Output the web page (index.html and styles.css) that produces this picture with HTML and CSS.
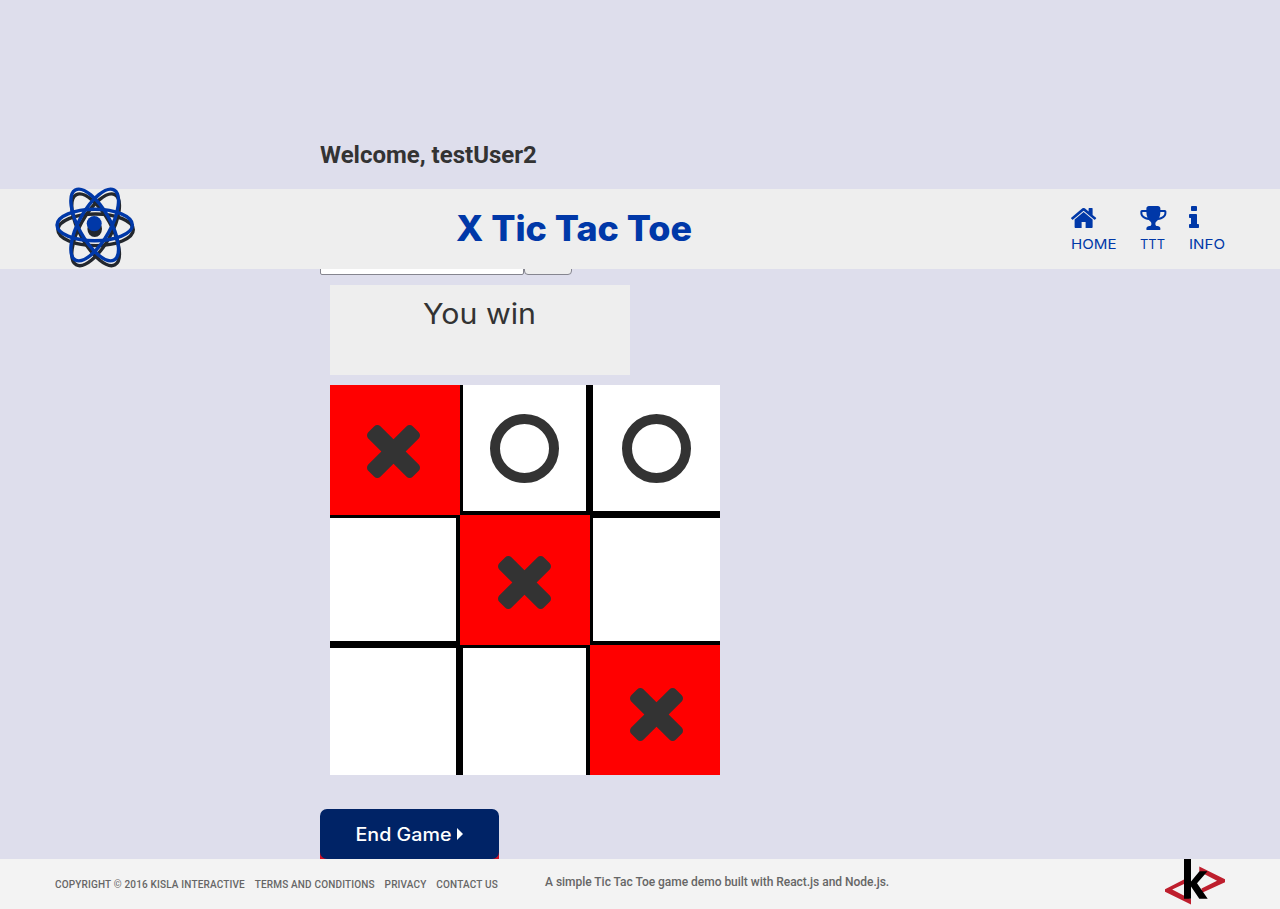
FILE: index.html
```html
<!DOCTYPE html>
<html lang="en">
<head>
<meta charset="utf-8">
<title>X Tic Tac Toe</title>
<link rel="stylesheet" href="styles.css">
</head>
<body>
<svg class="defs" width="0" height="0" aria-hidden="true">
  <symbol id="times" viewBox="110 366 1188 1188"><path d="M1298 1322q0 40-28 68l-136 136q-28 28-68 28t-68-28l-294-294-294 294q-28 28-68 28t-68-28l-136-136q-28-28-28-68t28-68l294-294-294-294q-28-28-28-68t28-68l136-136q28-28 68-28t68 28l294 294 294-294q28-28 68-28t68 28l136 136q28 28 28 68t-28 68l-294 294 294 294q28 28 28 68z"/></symbol>
  <g id="orbits">
    <ellipse cx="39.7" cy="38" rx="37.7" ry="15.8"/>
    <ellipse cx="39.7" cy="38" rx="40" ry="15.8" transform="rotate(61 39.7 38)"/>
    <ellipse cx="39.7" cy="38" rx="40" ry="15.8" transform="rotate(-61 39.7 38)"/>
  </g>
</svg>

<header class="header">
  <svg class="logo" width="80" height="80" viewBox="0 0 80 80">
    <g fill="none" stroke="#23272d" stroke-width="3.4"><use href="#orbits" x=".9" y="4.8"/></g>
    <ellipse cx="39.7" cy="42" rx="7.3" ry="8" fill="#23272d"/>
    <g fill="none" stroke="#0038a8" stroke-width="3.4"><use href="#orbits"/></g>
    <ellipse cx="39.2" cy="36.6" rx="7.5" ry="7.6" fill="#0038a8"/>
  </svg>
  <h1 class="title"><svg width="236" height="50"><text x="-1" y="34" textLength="236" lengthAdjust="spacingAndGlyphs">X Tic Tac Toe</text></svg></h1>
  <nav class="nav">
    <a class="nav-item nav-home">
      <svg width="28" height="28" viewBox="89 0 1792 1792"><path d="M1472 992v480q0 26-19 45t-45 19h-384v-384h-256v384h-384q-26 0-45-19t-19-45v-480q0-1 .5-3t.5-3l575-474 575 474q1 2 1 6zm223-69l-62 74q-8 9-21 11h-3q-13 0-21-7l-692-577-692 577q-12 8-24 7-13-2-21-11l-62-74q-8-10-7-23.5t11-21.5l719-599q32-26 76-26t76 26l244 204v-195q0-14 9-23t23-9h192q14 0 23 9t9 23v408l219 182q10 8 11 21.5t-7 23.5z"/></svg>
      <svg width="46" height="18"><text x="0" y="15" textLength="45.5" lengthAdjust="spacingAndGlyphs">HOME</text></svg>
    </a>
    <a class="nav-item nav-ttt">
      <svg width="28" height="28" viewBox="40 0 1792 1792"><path d="M522 883q-74-162-74-371h-256v96q0 78 94.5 162t235.5 113zm1078-275v-96h-256q0 209-74 371 141-29 235.5-113t94.5-162zm128-128v128q0 71-41.5 143t-112 130-173 97.5-215.5 44.5q-42 54-95 95-38 34-52.5 72.5t-14.5 89.5q0 54 30.5 91t97.5 37q75 0 133.5 45.5t58.5 114.5v64q0 14-9 23t-23 9h-832q-14 0-23-9t-9-23v-64q0-69 58.5-114.5t133.5-45.5q67 0 97.5-37t30.5-91q0-51-14.5-89.5t-52.5-72.5q-53-41-95-95-113-5-215.5-44.5t-173-97.5-112-130-41.5-143v-128q0-40 28-68t68-28h288v-96q0-66 47-113t113-47h576q66 0 113 47t47 113v96h288q40 0 68 28t28 68z"/></svg>
      <svg width="26" height="18"><text x="0" y="15" textLength="25" lengthAdjust="spacingAndGlyphs">TTT</text></svg>
    </a>
    <a class="nav-item nav-info">
      <svg width="28" height="28" viewBox="576 0 1792 1792"><path d="M1216 1344v128q0 26-19 45t-45 19h-512q-26 0-45-19t-19-45v-128q0-26 19-45t45-19h64v-384h-64q-26 0-45-19t-19-45v-128q0-26 19-45t45-19h384q26 0 45 19t19 45v576h64q26 0 45 19t19 45zm-128-1152v192q0 26-19 45t-45 19h-256q-26 0-45-19t-19-45v-192q0-26 19-45t45-19h256q26 0 45 19t19 45z"/></svg>
      <svg width="37" height="18"><text x="0" y="15" textLength="36" lengthAdjust="spacingAndGlyphs">INFO</text></svg>
    </a>
  </nav>
</header>

<main class="main">
  <h2 class="welcome">Welcome, testUser2</h2>
  <div class="chat"><div class="field"></div><div class="send"></div></div>
  <div class="status"><svg width="112" height="40"><text x="-1" y="28.5" textLength="113" lengthAdjust="spacingAndGlyphs">You win</text></svg></div>
  <div class="board">
    <div class="cell win"><svg class="x x1"><use href="#times"/></svg></div>
    <div class="cell c2"><i class="o"></i></div>
    <div class="cell c3"><i class="o"></i></div>
    <div class="cell r2"></div>
    <div class="cell win"><svg class="x x2"><use href="#times"/></svg></div>
    <div class="cell c3 r2"></div>
    <div class="cell r3"></div>
    <div class="cell c2 r3"></div>
    <div class="cell win"><svg class="x x3"><use href="#times"/></svg></div>
  </div>
  <div class="action"><div class="button"><svg width="96" height="26"><text x="-.5" y="20" textLength="96" lengthAdjust="spacingAndGlyphs">End Game</text></svg><i class="caret"></i></div></div>
</main>

<footer class="footer">
  <div class="links"><span>COPYRIGHT © 2016 KISLA INTERACTIVE</span><span>TERMS AND CONDITIONS</span><span>PRIVACY</span><span>CONTACT US</span></div>
  <p class="about">A simple Tic Tac Toe game demo built with React.js and Node.js.</p>
  <svg class="brand" width="60" height="50" viewBox="0 0 60 50">
    <path fill="#be1e2d" d="M0 30.2 19 20.5V25L7.2 30.5 26 40.2V45.5L0 32.8ZM34.3 7.5 60 20.3V23.2L36.5 34V29.5L52 21.7 34.3 12.5Z"/>
    <path d="M19 0h7v22.5l8.5-10.3h8L32 24.2l10.7 15.5h-8.4L26 27.5v12.3h-7Z"/>
  </svg>
</footer>
</body>
</html>
```
FILE: styles.css
```css
* { box-sizing: border-box; }
html, body { height: 100%; }
body {
  margin: 0;
  overflow: hidden;
  background: #dedeec;
  color: #333;
  font-family: Roboto, sans-serif;
}
svg { display: block; }
.defs { position: absolute; }

.header {
  position: absolute;
  top: 189px;
  left: 0;
  right: 0;
  height: 80px;
  padding: 0 55px;
  display: flex;
  background: #eee;
  color: #0038a8;
}
.logo { margin-top: -2px; overflow: visible; }
.title { margin: 18px 0 0 322px; }
.title svg { overflow: visible; fill: #0038a8; font: 800 35px Inter, sans-serif; }
.nav { display: flex; margin-left: auto; padding-top: 15px; }
.nav-item svg { fill: #0038a8; overflow: visible; }
.nav-item text { font: 400 13.5px Inter, sans-serif; }
.nav-home { width: 69px; }
.nav-ttt { width: 49px; }
.nav-info { width: 36px; }
.nav-item svg + svg { margin-top: 2px; }

.main { padding: 140px 0 0 320px; }
.welcome { margin: 0; height: 109px; font-size: 24px; line-height: 30px; font-weight: 700; }
.chat { display: flex; height: 26px; }
.field { width: 204px; border: 1px solid #85858f; border-radius: 2px; background: #fff; }
.send { width: 48px; border: 1px solid #85858f; border-radius: 4px; background: #eee; }
.status {
  width: 300px;
  height: 90px;
  margin: 10px 0 10px 10px;
  padding: 10px 0 0 94px;
  background: #eee;
}
.status svg { overflow: visible; fill: #333; font: 400 28px Inter, sans-serif; }

.board {
  width: 390px;
  margin-left: 10px;
  display: grid;
  grid-template-columns: repeat(3, 130px);
  grid-template-rows: repeat(3, 130px);
}
.cell {
  display: flex;
  background: #fff;
  border: 0 solid #000;
  border-right-width: 4px;
  border-bottom-width: 4px;
}
.c2, .c3 { border-left-width: 3px; }
.c3 { border-right-width: 0; }
.r2, .r3 { border-top-width: 3px; }
.r3 { border-bottom-width: 0; }
.win { border: 0; background: #f00; }
.x { width: 53px; height: 53px; fill: #333; }
.x1 { margin: 40px 0 0 36.5px; }
.x2 { margin: 40.5px 0 0 37.5px; }
.x3 { margin: 42.5px 0 0 40px; }
.o {
  width: 69px;
  height: 69px;
  margin: 29px 0 0 27px;
  border: 10px solid #333;
  border-radius: 50%;
}
.c3 .o { margin-left: 29px; }

.action { width: 179px; margin-top: 34px; background: linear-gradient(transparent 40px, #ce1126 40px); }
.button {
  height: 50px;
  padding-left: 36px;
  display: flex;
  align-items: center;
  border-radius: 7px;
  background: #002366;
}
.button svg { overflow: visible; fill: #fff; font: 500 18px Inter, sans-serif; }
.caret { margin-left: 4.5px; border: 6px solid transparent; border-left: 6.5px solid #fff; border-right: 0; }

.footer {
  position: absolute;
  bottom: 0;
  left: 0;
  right: 0;
  height: 50px;
  padding: 0 55px;
  display: flex;
  background: #f3f3f3;
  color: #666;
  font-weight: 500;
}
.links { display: flex; gap: 9.8px; width: 490px; font-size: 10px; letter-spacing: .165px; line-height: 52px; white-space: nowrap; }
.about { margin: 0; font-size: 12px; letter-spacing: -.025px; line-height: 46px; white-space: nowrap; }
.brand { margin-left: auto; }
```
